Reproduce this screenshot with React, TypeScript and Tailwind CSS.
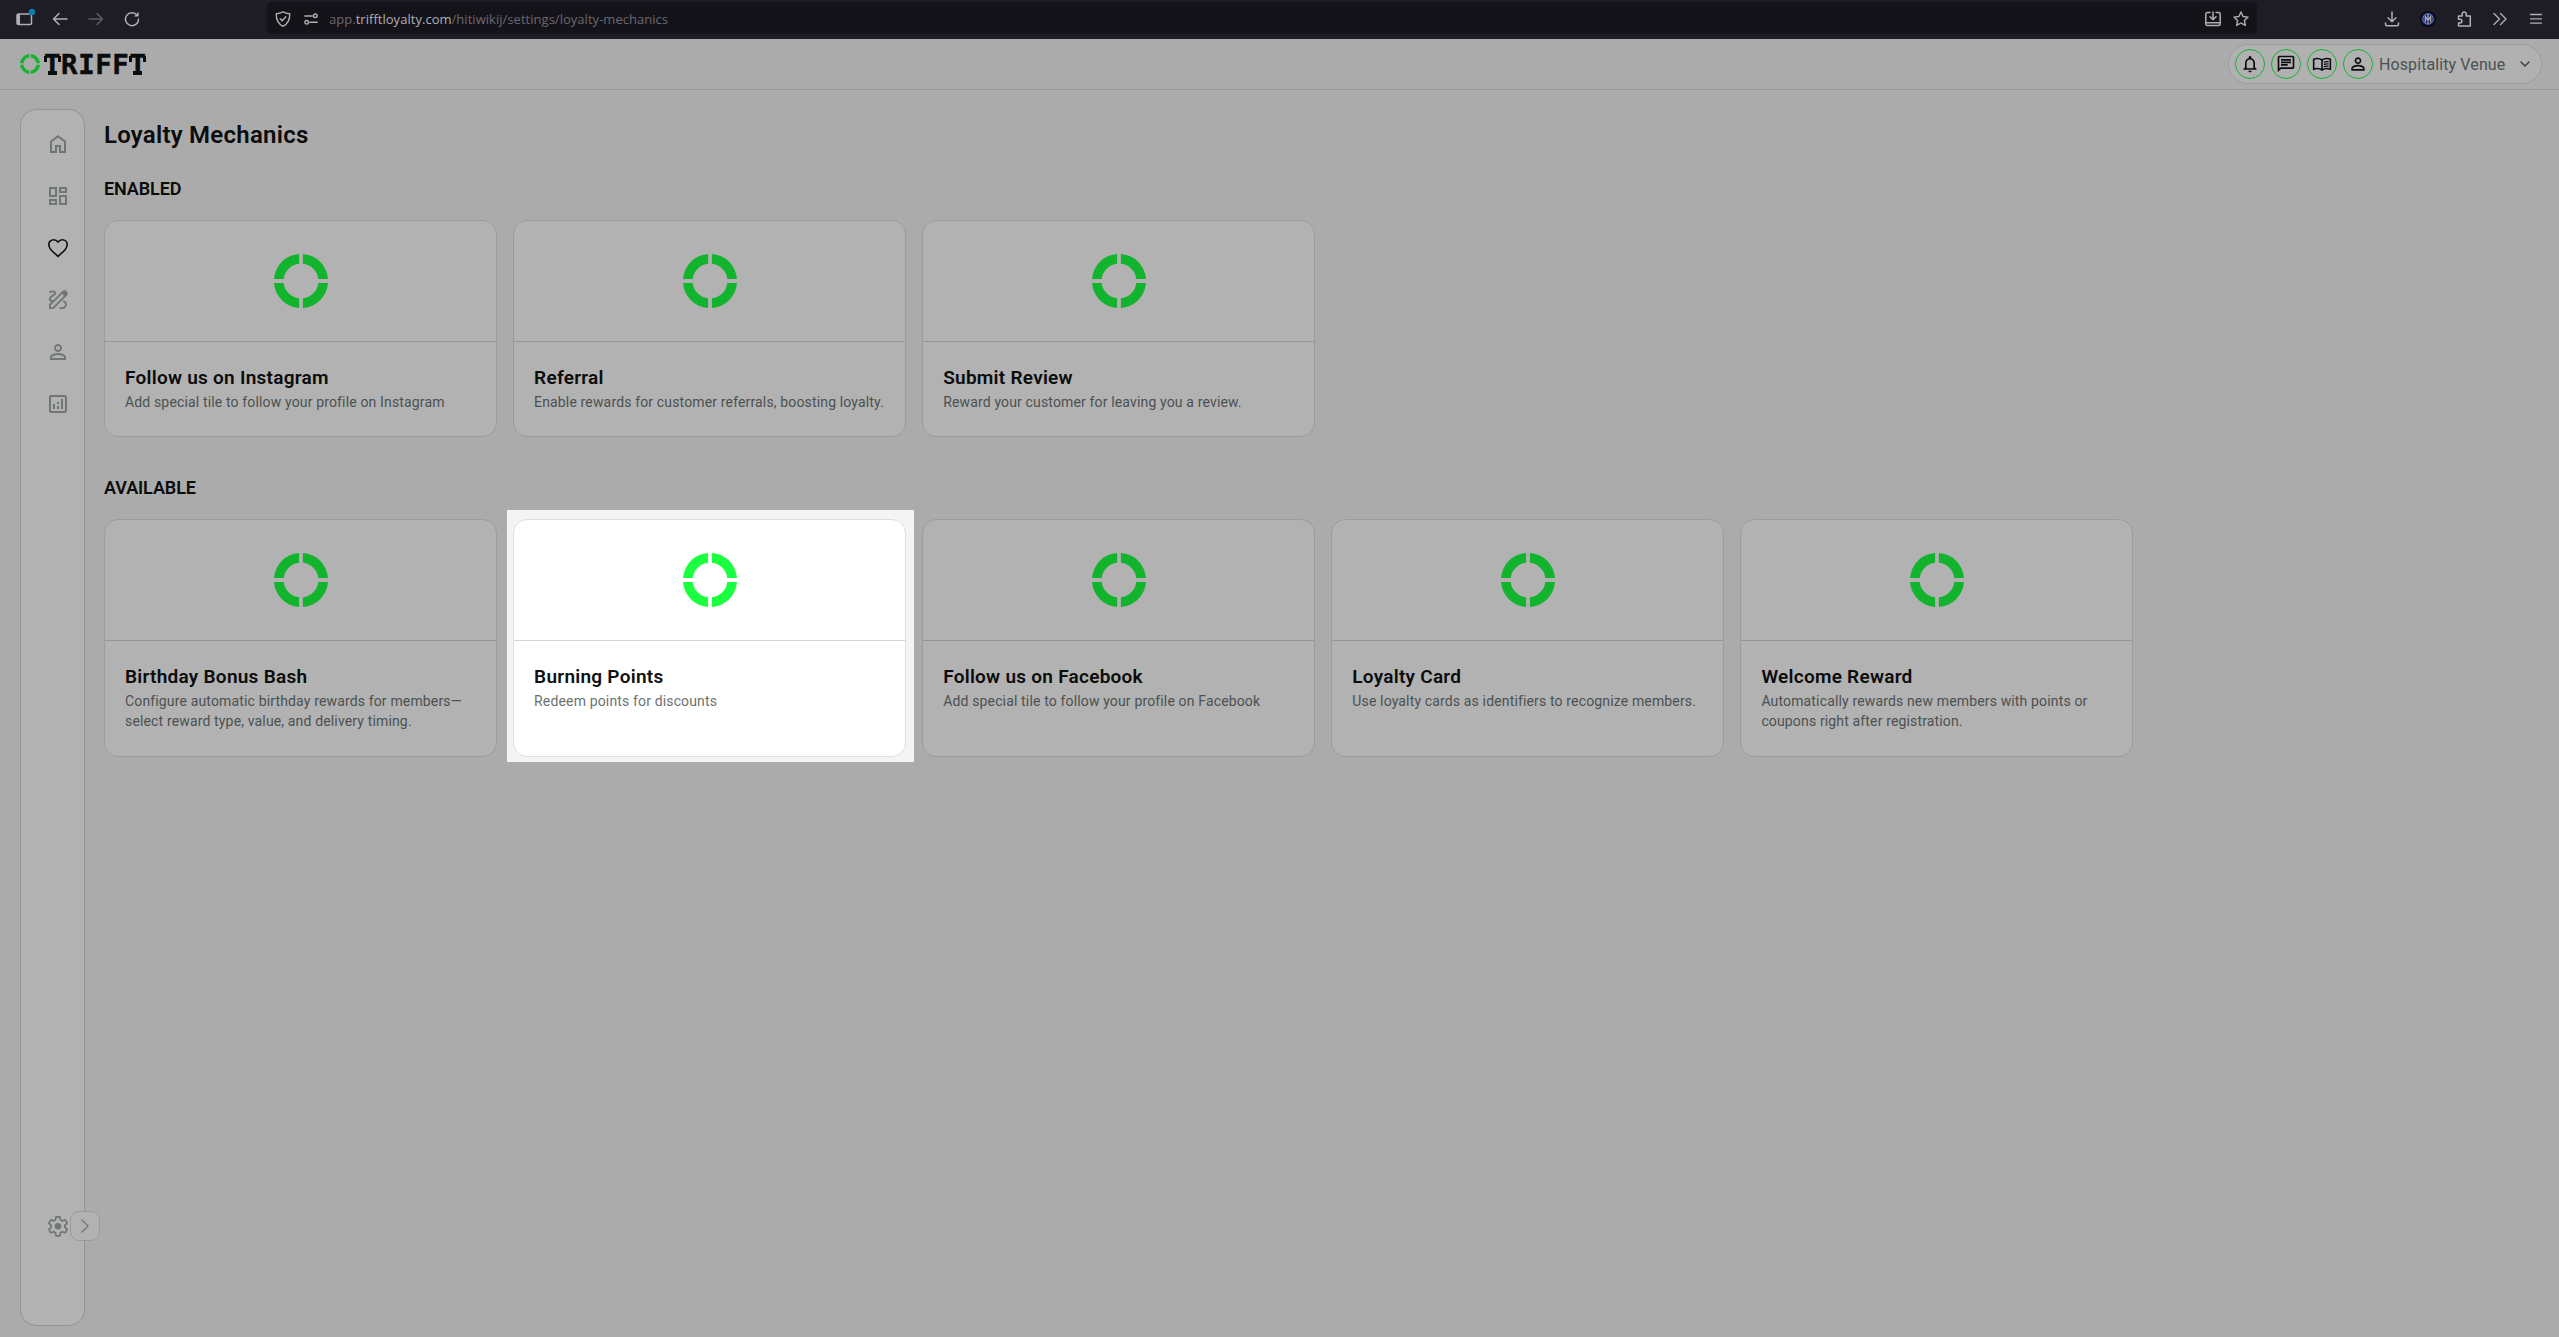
import React from 'react';
import {
  MdOutlineDashboard, MdPersonOutline, MdOutlineAnalytics, MdNotificationsNone, MdOutlineChat,
} from 'react-icons/md';
import { ChevronRight, ChevronDown } from 'lucide-react';

type IconProps = { size?: number; className?: string };

function HomeIcon({ size = 24, className }: IconProps) {
  return (
    <svg width={size} height={size} className={className} viewBox="0 0 24 24" fill="currentColor">
      <path d="M6 19h3v-6h6v6h3v-9l-6-4.500L6 10v9Zm-2 2V9l8-6l8 6v12h-7v-6h-2v6H4Z" />
    </svg>
  );
}

function HeartIcon({ size = 24, className }: IconProps) {
  return (
    <svg width={size} height={size} className={className} viewBox="0 0 24 24" fill="none" stroke="currentColor" strokeWidth="1.600" strokeLinejoin="round">
      <path d="M12 20.300C5 14.200 2.800 12 2.800 8.600A4.900 4.900 0 0 1 7.700 3.700C9.500 3.700 11 4.600 12 6.200C13 4.600 14.500 3.700 16.300 3.700A4.900 4.900 0 0 1 21.200 8.600C21.200 12 19 14.200 12 20.300Z" />
    </svg>
  );
}

function BookIcon({ size = 24, className }: IconProps) {
  return (
    <svg width={size} height={size} className={className} viewBox="0 0 24 24" fill="none" stroke="currentColor" strokeWidth="1.900">
      <path d="M12 7.200C9 5.200 5 5.200 2 6.300V18.200C5 17.200 9 17.200 12 19.200C15 17.200 19 17.200 22 18.200V6.300C19 5.200 15 5.200 12 7.200V19" />
      <path d="M14.200 9.800c2-.8 3.800-.9 5.800-.5M14.200 12.500c2-.8 3.800-.9 5.800-.5M14.200 15.200c2-.8 3.800-.9 5.800-.5" strokeWidth="1.500" />
    </svg>
  );
}

function DrawIcon({ size = 24, className }: IconProps) {
  return (
    <svg width={size} height={size} className={className} viewBox="0 0 24 24" fill="none" stroke="currentColor" strokeWidth="1.900">
      <path d="M3.900 20.100V16.900L17.600 3.200L20.800 6.400L7.100 20.100Z" strokeLinejoin="round" />
      <path d="M15.500 5.200L18.200 2.600Q19.200 2 20.200 2.800L21.300 3.900Q22 4.900 21.300 5.900L18.700 8.500Z" fill="currentColor" stroke="none" />
      <path d="M3.500 4.600C5.500 3 9 2.800 9.200 5C9.400 7.300 3.800 8 3.800 10.800C3.800 12.200 5.200 13.200 6.900 13.400" />
      <path d="M17 13.200C19.500 14 20.200 15.400 20 16.800C19.700 19 16.500 20.200 13.500 20.200" />
    </svg>
  );
}

function Ring({ className }: { className: string }) {
  return (
    <svg viewBox="0 0 54 54" className={className} fill="currentColor">
      <path d="M25.1 0A27 27 0 0 0 0 25.1H9.7A17.4 17.4 0 0 1 25.1 9.7Z" />
      <path d="M28.9 0A27 27 0 0 1 54 25.1H44.3A17.4 17.4 0 0 0 28.9 9.7Z" />
      <path d="M25.1 54A27 27 0 0 1 0 28.9H9.7A17.4 17.4 0 0 0 25.1 44.3Z" />
      <path d="M28.9 54A27 27 0 0 0 54 28.9H44.3A17.4 17.4 0 0 1 28.9 44.3Z" />
    </svg>
  );
}

function SlabT() {
  return (
    <span className="relative inline-block">
      T
      <span className="absolute top-[7px] left-0 h-[6px] w-[3px] bg-current" />
      <span className="absolute top-[7px] right-[0.5px] h-[6px] w-[3px] bg-current" />
      <span className="absolute top-[22px] left-[4px] h-[4px] w-[9px] bg-current" />
    </span>
  );
}

function BrowserBar() {
  return (
    <div className="flex h-[39px] items-start bg-[#1e1d25] text-[#b0b0b3]">
      <div className="flex h-[37px] w-[267px] shrink-0 items-center">
        <svg className="ml-4 h-[18px] w-[18px] overflow-visible" viewBox="0 0 18 18" fill="none" stroke="currentColor" strokeWidth="1.5">
          <rect x="1" y="4" width="14.5" height="10.5" rx="1.5" />
          <path d="M2.500 4v10.500" strokeWidth="3" />
          <circle cx="16" cy="2" r="3.200" fill="#0a7cb0" stroke="none" />
        </svg>
        <svg className="ml-[18px] h-4 w-4" viewBox="0 0 16 16" fill="none" stroke="currentColor" strokeWidth="1.5" strokeLinecap="round" strokeLinejoin="round">
          <path d="M15 8H1.5M7 2.5L1.5 8L7 13.5" />
        </svg>
        <svg className="ml-5 h-4 w-4 text-[#5d5c62]" viewBox="0 0 16 16" fill="none" stroke="currentColor" strokeWidth="1.5" strokeLinecap="round" strokeLinejoin="round">
          <path d="M1 8h13.5M9 2.5L14.500 8L9 13.500" />
        </svg>
        <svg className="ml-5 h-4 w-4" viewBox="0 0 16 16" fill="none" stroke="currentColor" strokeWidth="1.5" strokeLinecap="round">
          <path d="M13.200 4.300A6.500 6.500 0 1 0 14.500 8.200" />
          <path d="M14.600 1v4.600H10z" fill="currentColor" stroke="none" />
        </svg>
      </div>
      <div className="mt-[2px] flex h-8 w-[1990px] shrink-0 items-center rounded-[5px] bg-[#141319] pt-px">
        <svg className="ml-2 h-4 w-4" viewBox="0 0 16 16" fill="none" stroke="currentColor" strokeWidth="1.400" strokeLinecap="round" strokeLinejoin="round">
          <path d="M8 .8C6.500 2 4 2.700 1.300 2.700C1 8.500 3.200 13 8 15.300C12.800 13 15 8.500 14.700 2.700C12 2.700 9.500 2 8 .8Z" />
          <path d="M5.200 7.800l2 2l3.600-4" />
        </svg>
        <svg className="ml-[13px] h-[14px] w-[14px]" viewBox="0 0 14 14" fill="none" stroke="currentColor" strokeWidth="1.400" strokeLinecap="round">
          <path d="M.8 4h7.400M6 10.300h7.200" />
          <circle cx="11.300" cy="3.800" r="1.800" /><circle cx="2.700" cy="10.300" r="1.800" />
        </svg>
        <div className="ml-[11px] pt-[3px] font-['Open_Sans',sans-serif] text-[13px] tracking-[0.03px] whitespace-nowrap text-[#69686e]">
          app.<span className="text-[#b0b0b3]">trifftloyalty.com</span>/hitiwikij/settings/loyalty-mechanics
        </div>
        <svg className="mr-3 ml-auto h-4 w-4" viewBox="0 0 16 16" fill="none" stroke="currentColor" strokeWidth="1.500" strokeLinecap="round" strokeLinejoin="round">
          <path d="M5 1.500H2.300A1.500 1.500 0 0 0 .8 3v10a1.500 1.500 0 0 0 1.500 1.500h11.400a1.500 1.500 0 0 0 1.500-1.500V3a1.500 1.500 0 0 0-1.500-1.500H11M1 11.800h14M8 1v7.500M5 5.800l3 3l3-3" />
        </svg>
        <svg className="mr-2 h-4 w-4" viewBox="0 0 16 16" fill="none" stroke="currentColor" strokeWidth="1.400" strokeLinejoin="round">
          <path d="M8 1l2.100 4.500l5 .6l-3.700 3.400l1 4.900L8 12l-4.400 2.400l1-4.900L.9 6.100l5-.6z" />
        </svg>
      </div>
      <div className="flex h-[37px] flex-1 items-center">
        <svg className="ml-[127px] h-4 w-4" viewBox="0 0 16 16" fill="none" stroke="currentColor" strokeWidth="1.500" strokeLinecap="round" strokeLinejoin="round">
          <path d="M8 1v9.500M4 6.800l4 4l4-4M1.500 12v1.300a1.500 1.500 0 0 0 1.500 1.500h10a1.500 1.500 0 0 0 1.500-1.500V12" />
        </svg>
        <svg className="ml-5 h-4 w-4" viewBox="0 0 16 16">
          <circle cx="8" cy="8" r="8" fill="#08080f" />
          <circle cx="8" cy="8" r="6.600" fill="#15206b" />
          <circle cx="8" cy="8" r="5.200" fill="none" stroke="#8a8ca0" strokeWidth=".8" />
          <path d="M5.300 4.500v7M8 3v10M10.700 4.500v7M5.500 5.500L8 10l2.500-4.500" stroke="#a5a6b2" strokeWidth="1.300" fill="none" />
        </svg>
        <svg className="ml-5 h-4 w-4" viewBox="0 0 16 16" fill="none" stroke="currentColor" strokeWidth="1.500" strokeLinejoin="round">
          <path d="M2.500 5h3.700V3a2 2 0 0 1 4 0v2h4.100v10H2.500v-3H4a1.900 1.900 0 0 0 0-3.800H2.500z" />
        </svg>
        <svg className="ml-5 h-4 w-4" viewBox="0 0 16 16" fill="none" stroke="currentColor" strokeWidth="1.400" strokeLinecap="round" strokeLinejoin="round">
          <path d="M2 2.500L7.500 8L2 13.500M8.500 2.500L14 8l-5.500 5.500" />
        </svg>
        <svg className="ml-5 h-4 w-4" viewBox="0 0 16 16" fill="none" stroke="currentColor" strokeWidth="1.300" strokeLinecap="round">
          <path d="M2.500 3.500h11M2.500 7.800h11M2.500 12.200h11" />
        </svg>
      </div>
    </div>
  );
}

function Header() {
  const icons = [MdNotificationsNone, MdOutlineChat, BookIcon, MdPersonOutline];
  return (
    <header className="flex h-[51px] items-center justify-between border-b border-[#999999] pr-[17px] pl-5">
      <div className="flex items-center">
        <Ring className="h-5 w-5 text-[#13b42d]" />
        <div className="ml-[4px] pt-px font-['DejaVu_Sans_Mono',monospace] text-[27.400px] leading-8 font-bold tracking-[0.600px] text-[#0b0c0c] [-webkit-text-stroke:0.5px_#0b0c0c]">
          <SlabT />RIFF<SlabT />
        </div>
      </div>
      <div className="flex h-10 w-[314px] items-center rounded-full border border-[#9c9c9c] bg-[#b1b1b1] pl-1.5">
        <div className="flex gap-1.5">
          {icons.map((Icon, i) => (
            <div key={i} className="flex h-[30px] w-[30px] items-center justify-center rounded-full border border-[#13b42d] text-[#0b0c0c]">
              <Icon size={20} />
            </div>
          ))}
        </div>
        <span className="ml-1.5 pt-px text-base tracking-[0.100px] whitespace-nowrap text-[#4b5150]">Hospitality Venue</span>
        <ChevronDown size={16} strokeWidth={2.2} className="mr-2 ml-auto text-[#3c4140]" />
      </div>
    </header>
  );
}

function Sidebar() {
  const icons = [HomeIcon, MdOutlineDashboard, HeartIcon, DrawIcon, MdPersonOutline, MdOutlineAnalytics];
  return (
    <nav className="relative flex h-[1217px] w-[65px] shrink-0 flex-col items-center rounded-[16px] border border-[#919594] bg-[#b2b2b2] pt-[22px] pl-[11px] text-[#707675]">
      <div className="flex flex-col gap-7">
        {icons.map((Icon, i) => (
          <Icon key={i} size={24} className={i === 2 ? 'text-[#0b0c0c]' : ''} />
        ))}
      </div>
      <svg viewBox="0 0 24 24" className="mt-auto mb-[87px] h-6 w-6" fill="none" stroke="currentColor" strokeWidth="1.700" strokeLinejoin="round">
        <path d="M10 2.800h4l.5 3l1.900 1.100l2.800-1.100l2 3.500l-2.300 1.900v2.200l2.300 1.900l-2 3.500l-2.800-1.100l-1.900 1.100l-.5 3h-4l-.5-3l-1.900-1.100l-2.800 1.100l-2-3.500l2.300-1.900v-2.200L2.800 9.300l2-3.500l2.800 1.100l1.900-1.100z" />
        <circle cx="12" cy="12.200" r="3.300" fill="currentColor" stroke="none" />
      </svg>
      <button className="absolute top-[1101px] left-[49px] flex h-[30px] w-[30px] items-center justify-center rounded-[9px] border border-[#999c9b] bg-[#b2b2b2]">
        <ChevronRight size={24} strokeWidth={1.400} />
      </button>
    </nav>
  );
}

type Mechanic = { title: string; text: string; active?: boolean };

const enabled: Mechanic[] = [
  { title: 'Follow us on Instagram', text: 'Add special tile to follow your profile on Instagram' },
  { title: 'Referral', text: 'Enable rewards for customer referrals, boosting loyalty.' },
  { title: 'Submit Review', text: 'Reward your customer for leaving you a review.' },
];

const available: Mechanic[] = [
  { title: 'Birthday Bonus Bash', text: 'Configure automatic birthday rewards for members—select reward type, value, and delivery timing.' },
  { title: 'Burning Points', text: 'Redeem points for discounts', active: true },
  { title: 'Follow us on Facebook', text: 'Add special tile to follow your profile on Facebook' },
  { title: 'Loyalty Card', text: 'Use loyalty cards as identifiers to recognize members.' },
  { title: 'Welcome Reward', text: 'Automatically rewards new members with points or coupons right after registration.' },
];

function Card({ title, text, active }: Mechanic) {
  return (
    <div className="relative">
      {active && <div className="absolute -top-[9px] -right-[8px] -bottom-[5px] -left-[6px] bg-[#f4f4f4]" />}
      <article className={'relative h-full rounded-[14px] border ' + (active ? 'border-[#dfdfdf] bg-white' : 'border-[#9c9c9c] bg-[#b2b2b2]')}>
        <div className={'flex h-[121px] items-center justify-center border-b pl-px ' + (active ? 'border-[#d4d4d4]' : 'border-[#959595]')}>
          <Ring className={'h-[54px] w-[54px] ' + (active ? 'text-[#1bff41]' : 'text-[#13b42d]')} />
        </div>
        <div className="px-5 pt-6">
          <h3 className={'text-[19px] leading-6 font-semibold tracking-[0.260px] ' + (active ? 'text-[#101111]' : 'text-[#0b0c0c]')}>{title}</h3>
          <p className={'mt-0.5 text-sm leading-5 tracking-[0.150px] ' + (active ? 'text-[#6b7372]' : 'text-[#4b5150]')}>{text}</p>
        </div>
      </article>
    </div>
  );
}

export default function App() {
  return (
    <div className="h-[1337px] w-[2559px] overflow-hidden bg-[#ababab] font-[Roboto,sans-serif]">
      <BrowserBar />
      <Header />
      <div className="flex pt-[19px] pl-5">
        <Sidebar />
        <main className="ml-[19px] text-[#0b0c0c]">
          <h1 className="mt-[10px] text-2xl leading-8 font-semibold tracking-[0.240px]">Loyalty Mechanics</h1>
          <h2 className="mt-[26px] text-lg leading-6 font-semibold tracking-[-0.100px]">ENABLED</h2>
          <div className="mt-[19px] grid h-[217px] grid-cols-[repeat(3,392.5px)] gap-[16.600px]">
            {enabled.map((m) => <Card key={m.title} {...m} />)}
          </div>
          <h2 className="mt-[39px] text-lg leading-6 font-semibold tracking-[-0.100px]">AVAILABLE</h2>
          <div className="mt-[19px] grid h-[238px] grid-cols-[repeat(5,392.5px)] gap-[16.600px]">
            {available.map((m) => <Card key={m.title} {...m} />)}
          </div>
        </main>
      </div>
    </div>
  );
}
